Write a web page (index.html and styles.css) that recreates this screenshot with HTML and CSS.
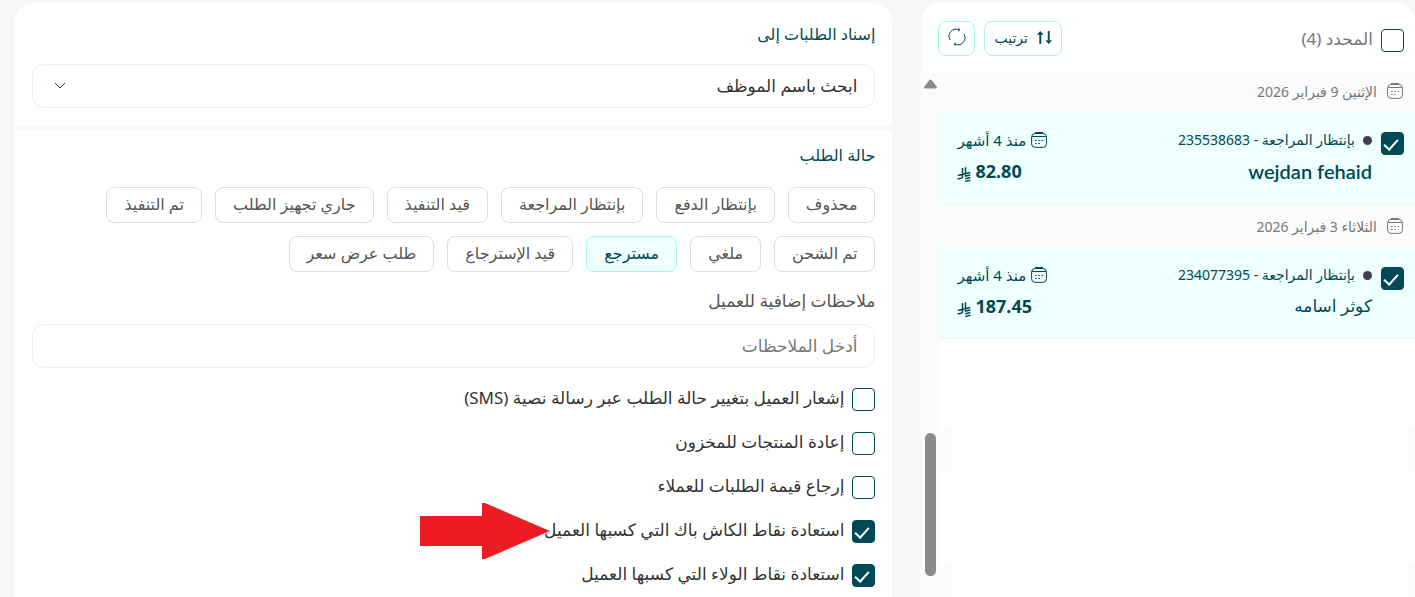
FILE: index.html
```html
<!DOCTYPE html>
<html lang="ar" dir="rtl">

<head>
  <meta charset="UTF-8">
  <meta name="viewport" content="width=device-width, initial-scale=1.0">
  <link rel="stylesheet" href="styles.css">
  <title>إدارة الطلبات</title>
</head>

<body>
  <!-- shared icons -->
  <svg class="sprite" aria-hidden="true">
    <symbol id="calendar" viewBox="0 0 16 16">
      <rect x=".6" y="1.500" width="14.800" height="13.900" rx="3.500" />
      <path d="M1 4.500h14M4 .5h8" />
      <path d="M4 8.500h1.500M7.300 8.500h1.500M10.600 8.500h1.500M4 11.500h1.500M7.300 11.500h1.500" />
    </symbol>
    <symbol id="riyal" viewBox="0 0 14 15">
      <path d="M5.500 1v8.500q0 1.300-1.500 1.700L.6 12M8.500 .3v8.700l4.800-1.100M.8 8.400l12.500-2.900M8.300 11.700l5-1.100M8.300 14.400l5-1.100" />
    </symbol>
  </svg>

  <div class="main">
    <aside class="orders">
      <div class="orders-header">
        <label class="select-all">
          <input class="checkbox" type="checkbox">
          <span>المحدد (4)</span>
        </label>
        <div class="actions">
          <button type="button" class="button">
            <svg class="icon-sort" viewBox="0 0 16 16">
              <path d="M3.500 15V4M12.500 1v10" />
              <path class="fill" d="M0 5L3.500 1 7 5zM9 11l3.500 4 3.500-4z" />
            </svg>
            ترتيب
          </button>
          <button type="button" class="button button-icon" aria-label="تحديث">
            <svg class="icon-refresh" viewBox="0 0 18 18">
              <path d="M2.200 12A7 7 0 0 1 11.500 2.100M15.800 6A7 7 0 0 1 6.500 15.900" />
              <path d="M10.800.3l.7 1.900-1.500 1M7.200 17.700l-.7-1.900 1.500-1" />
            </svg>
          </button>
        </div>
      </div>

      <div class="orders-body">
        <div class="orders-list">
          <h3 class="date"><svg class="icon-calendar"><use href="#calendar" /></svg>الإثنين 9 فبراير 2026</h3>
          <div class="order">
            <input class="checkbox" type="checkbox" aria-label="wejdan fehaid" checked>
            <div class="customer">
              <p class="status"><span class="dot"></span>بإنتظار المراجعة - 235538683</p>
              <p class="name" lang="en">wejdan fehaid</p>
            </div>
            <div class="summary">
              <p class="time"><svg class="icon-calendar"><use href="#calendar" /></svg>منذ 4 أشهر</p>
              <p class="price">82.80<svg class="icon-riyal"><use href="#riyal" /></svg></p>
            </div>
          </div>

          <h3 class="date"><svg class="icon-calendar"><use href="#calendar" /></svg>الثلاثاء 3 فبراير 2026</h3>
          <div class="order">
            <input class="checkbox" type="checkbox" aria-label="كوثر اسامه" checked>
            <div class="customer">
              <p class="status"><span class="dot"></span>بإنتظار المراجعة - 234077395</p>
              <p class="name">كوثر اسامه</p>
            </div>
            <div class="summary">
              <p class="time"><svg class="icon-calendar"><use href="#calendar" /></svg>منذ 4 أشهر</p>
              <p class="price">187.45<svg class="icon-riyal"><use href="#riyal" /></svg></p>
            </div>
          </div>

          <div class="blank-order"></div>
          <div class="blank-date"></div>
          <div class="blank-order"></div>
          <div class="blank-date"></div>
        </div>
        <div class="scrollbar">
          <svg class="scroll-up" viewBox="0 0 13 10"><path d="M5 1.500q1.500-2 3 0l4.500 6q1 2-1 2h-10q-2 0-1-2z" /></svg>
          <div class="scroll-thumb"></div>
        </div>
      </div>
    </aside>

    <form class="card">
      <section class="assign">
        <h2><label for="employee">إسناد الطلبات إلى</label></h2>
        <div class="select-container">
          <select class="field" id="employee">
            <option>ابحث باسم الموظف</option>
          </select>
          <svg class="icon-chevron" viewBox="0 0 12 7"><path d="M1 1l5 5 5-5" /></svg>
        </div>
      </section>

      <section class="state">
        <h2>حالة الطلب</h2>
        <div class="chips">
          <button type="button" class="chip">محذوف</button>
          <button type="button" class="chip">بإنتظار الدفع</button>
          <button type="button" class="chip">بإنتظار المراجعة</button>
          <button type="button" class="chip">قيد التنفيذ</button>
          <button type="button" class="chip">جاري تجهيز الطلب</button>
          <button type="button" class="chip">تم التنفيذ</button>
          <button type="button" class="chip">تم الشحن</button>
          <button type="button" class="chip">ملغي</button>
          <button type="button" class="chip active">مسترجع</button>
          <button type="button" class="chip">قيد الإسترجاع</button>
          <button type="button" class="chip">طلب عرض سعر</button>
        </div>

        <label class="notes-label" for="notes">ملاحظات إضافية للعميل</label>
        <input class="field" id="notes" type="text" placeholder="أدخل الملاحظات">

        <div class="options">
          <label class="option"><input class="checkbox" type="checkbox"><span>إشعار العميل بتغيير حالة الطلب عبر رسالة نصية (SMS)</span></label>
          <label class="option"><input class="checkbox" type="checkbox"><span>إعادة المنتجات للمخزون</span></label>
          <label class="option"><input class="checkbox" type="checkbox"><span>إرجاع قيمة الطلبات للعملاء</span></label>
          <label class="option">
            <input class="checkbox" type="checkbox" checked><span>استعادة نقاط الكاش باك التي كسبها العميل</span>
            <svg class="arrow" viewBox="0 0 130 56"><path d="M0 13h62V0l3 0 65 28-65 28h-3V43H0z" /></svg>
          </label>
          <label class="option"><input class="checkbox" type="checkbox" checked><span>استعادة نقاط الولاء التي كسبها العميل</span></label>
        </div>
      </section>
    </form>
  </div>
</body>

</html>
```
FILE: styles.css
```css
* {
  margin: 0;
  padding: 0;
  box-sizing: border-box;
}

body {
  font-family: 'Noto Sans', 'DejaVu Sans', sans-serif;
  font-size: 17px;
  color: #333;
  background: #f7f7f7;
}

button,
input,
select {
  font-family: inherit;
}

svg {
  fill: none;
  stroke: currentColor;
  flex-shrink: 0;
}

.sprite {
  display: none;
}

.main {
  display: grid;
  grid-template-columns: 9fr 16fr;
  gap: 29px;
  height: 100vh;
  padding: 3px 0 0 15px;
  overflow: hidden;
}

.checkbox {
  appearance: none;
  flex-shrink: 0;
  width: 23px;
  height: 23px;
  border: 1px solid #004956;
  border-radius: 4px;
  background: #fff;
}

.checkbox:checked {
  background: #004956;
}

.checkbox:checked::before {
  content: "";
  display: block;
  width: 12px;
  height: 6px;
  margin: 6px 5px;
  border: solid #fff;
  border-width: 0 0 2px 2px;
  transform: rotate(-48deg);
}

/* orders list */
.orders {
  display: flex;
  flex-direction: column;
  min-width: 0;
}

.orders-header {
  position: relative;
  z-index: 1;
  display: flex;
  align-items: center;
  justify-content: space-between;
  height: 70px;
  margin-bottom: -4px;
  padding: 0 11px 0 17px;
  background: #fff;
  border-radius: 18px 18px 0 0;
}

.select-all {
  display: flex;
  align-items: center;
  gap: 8px;
  padding-top: 4px;
  color: #777;
}

.select-all span,
.option span {
  padding-bottom: 4px;
}

.actions {
  display: flex;
  gap: 9px;
}

.button {
  display: flex;
  align-items: center;
  justify-content: center;
  gap: 9px;
  height: 35px;
  padding: 0 9px 2px;
  font-size: 14px;
  color: #004956;
  background: #fff;
  border: 1px solid #a5f8ea;
  border-radius: 8px;
}

.button-icon {
  width: 37px;
}

.icon-sort {
  width: 15px;
  height: 15px;
  stroke-width: 2;
}

.icon-sort .fill {
  fill: currentColor;
  stroke: none;
}

.icon-refresh {
  width: 18px;
  height: 18px;
}

.orders-body {
  display: flex;
  flex: 1;
  min-height: 0;
}

.orders-list {
  flex: 1;
  overflow: hidden;
}

.date {
  display: flex;
  align-items: center;
  gap: 10px;
  height: 44px;
  padding: 0 12px;
  font-size: 14px;
  font-weight: normal;
  color: #777;
  background: #fbfbfb;
}

.icon-calendar {
  width: 16px;
  height: 16px;
}

.order {
  display: flex;
  height: 91px;
  padding: 15px 11px 15px 17px;
  color: #004956;
  background: #effffd;
  border-bottom: 1px solid #f3f3f3;
}

.order .checkbox {
  margin: 4px 0 0 9px;
}

.customer {
  flex: 1;
}

.status,
.time {
  display: flex;
  align-items: center;
  font-size: 14px;
  line-height: 24px;
}

.status {
  gap: 8px;
}

.time {
  gap: 5px;
  font-size: 15px;
}

.dot {
  width: 9px;
  height: 9px;
  border-radius: 50%;
  background: #403f50;
}

.name {
  font-size: 17px;
  font-weight: 500;
  line-height: 38px;
}

.name:lang(en) {
  font-family: Lato, sans-serif;
  font-size: 20px;
  font-weight: 600;
}

.summary {
  width: 96px;
}

.summary .time {
  justify-content: flex-end;
}

.price {
  display: flex;
  align-items: center;
  justify-content: flex-end;
  gap: 4px;
  font-size: 18px;
  font-weight: bold;
  line-height: 38px;
}

.icon-riyal {
  width: 14px;
  height: 15px;
  margin-top: 7px;
  stroke-width: 1.5;
}

.blank-order {
  height: 91px;
  background: #fff;
}

.blank-date {
  height: 43px;
  background: #fff;
  border: solid #fbfbfb;
  border-width: 0 6px 0 13px;
}

.scrollbar {
  display: flex;
  flex-direction: column;
  align-items: center;
  width: 19px;
  padding-top: 10px;
  background: #fbfbfb;
}

.scroll-up {
  width: 13px;
  height: 10px;
  fill: #8b8b8b;
  stroke: none;
}

.scroll-thumb {
  width: 11px;
  height: 143px;
  margin-top: 344px;
  border-radius: 6px;
  background: #8b8b8b;
}

/* form card */
.card {
  min-width: 0;
  background: #fff;
  border-radius: 18px 18px 0 0;
}

.assign {
  padding: 17px 17px 18px;
  border-bottom: 4px solid #f7f7f7;
}

.state {
  padding: 11px 17px 0;
}

h2 {
  margin-bottom: 16px;
  font-size: 16px;
  font-weight: 500;
  line-height: 28px;
  color: #004956;
}

.field {
  display: block;
  width: 100%;
  height: 44px;
  padding: 0 17px 2px;
  font-size: 17px;
  color: #333;
  background: #fff;
  border: 1px solid #eee;
  border-radius: 12px;
  outline: 0;
}

.field::placeholder {
  color: #777;
}

select.field {
  appearance: none;
}

.select-container {
  position: relative;
}

.icon-chevron {
  position: absolute;
  top: 18px;
  left: 22px;
  width: 12px;
  height: 7px;
  color: #004956;
}

.chips {
  display: flex;
  flex-wrap: wrap;
  gap: 13px;
  margin-top: 18px;
}

.chip {
  height: 36px;
  padding: 0 17px 2px;
  font-size: 16px;
  color: #555;
  background: #fff;
  border: 1px solid #ddd;
  border-radius: 8px;
}

.chip.active {
  color: #004956;
  background: #effffd;
  border-color: #a5f8ea;
}

.notes-label {
  display: block;
  margin: 15px 0 9px;
  line-height: 28px;
  color: #555;
}

.options {
  margin-top: 9px;
}

.option {
  position: relative;
  display: flex;
  align-items: center;
  gap: 8px;
  height: 44px;
}

/* points at the cashback option */
.arrow {
  position: absolute;
  right: 325px;
  top: -6px;
  width: 130px;
  height: 56px;
  fill: #ed1c24;
  stroke: none;
}
```
